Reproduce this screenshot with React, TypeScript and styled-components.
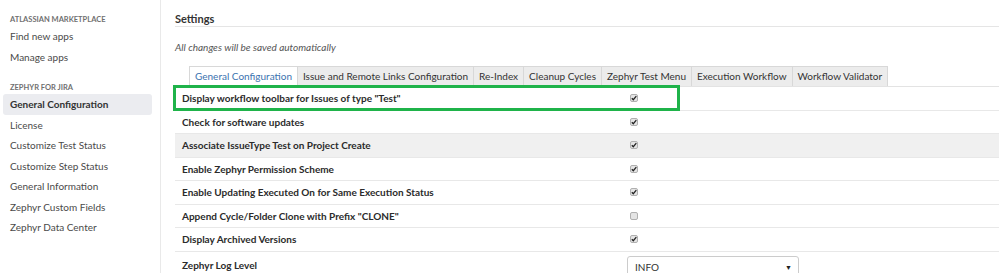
import styled, { createGlobalStyle } from "styled-components";

const GlobalStyle = createGlobalStyle`
  body {
    margin: 0;
    background: #fff;
    font-family: Lato, "Open Sans", sans-serif;
    color: #333;
  }
`;

const Page = styled.div`
  display: flex;
  width: 999px;
  height: 273px;
  overflow: hidden;
`;

const Sidebar = styled.nav`
  width: 161px;
  flex-shrink: 0;
  border-right: 1px solid #e9e9e9;
  padding-top: 14px;
  box-sizing: border-box;
`;

const GroupTitle = styled.div<{ gap?: number }>`
  margin-top: ${({ gap }) => gap || 0}px;
  padding-left: 10px;
  height: 12px;
  line-height: 12px;
  font-size: 7.5px;
  font-weight: 700;
  color: #707070;
  text-transform: uppercase;
`;

const NavItem = styled.div<{ active?: boolean }>`
  margin: 0 8px 0 3px;
  padding-left: 7px;
  height: 20.5px;
  line-height: 20.5px;
  font-size: 10px;
  border-radius: 3px;
  white-space: nowrap;
  color: ${({ active }) => (active ? "#333" : "#4a4a4a")};
  font-weight: ${({ active }) => (active ? 700 : 400)};
  background: ${({ active }) => (active ? "#ebecf0" : "transparent")};
`;

const Main = styled.main`
  flex: 1;
  padding-left: 14px;
`;

const Title = styled.h2`
  margin: 0;
  padding-top: 11px;
  height: 15px;
  line-height: 15px;
  font-size: 11px;
  font-weight: 700;
  color: #333;
  border-bottom: 1px solid #e5e5e5;
`;

const Note = styled.p`
  margin: 12px 0 0;
  height: 16px;
  line-height: 16px;
  font-size: 10px;
  font-style: italic;
  color: #555;
`;

const Tabs = styled.div`
  display: flex;
  margin-top: 11px;
  padding-left: 14px;
  border-bottom: 1px solid #e3e3e3;
`;

const Tab = styled.div<{ active?: boolean }>`
  height: 19px;
  line-height: 19px;
  padding: 0 5px;
  font-size: 10px;
  white-space: nowrap;
  border: 1px solid #d8d8d8;
  border-bottom: none;
  margin-right: -1px;
  margin-bottom: -1px;
  color: ${({ active }) => (active ? "#3b73af" : "#333")};
  background: ${({ active }) => (active ? "#fff" : "#ececec")};
  padding-bottom: ${({ active }) => (active ? 1 : 0)}px;
`;

const Row = styled.div<{ hover?: boolean }>`
  position: relative;
  display: grid;
  grid-template-columns: 452px 1fr;
  align-items: center;
  height: 23.5px;
  border-bottom: 1px solid #e8e8e8;
  box-sizing: border-box;
  background: ${({ hover }) => (hover ? "#f0f0f0" : "transparent")};
`;

const Label = styled.div`
  padding-left: 7px;
  font-size: 10px;
  font-weight: 700;
  color: #2b2b2b;
  white-space: nowrap;
`;

const Cell = styled.div`
  display: flex;
  align-items: center;
`;

const Check = styled.span<{ on?: boolean }>`
  display: inline-flex;
  align-items: center;
  justify-content: center;
  margin-left: 3px;
  width: 8px;
  height: 8px;
  border: 1px solid #b0b0b0;
  border-radius: 2px;
  background: #e4e4e4;
  box-sizing: border-box;
  svg {
    display: ${({ on }) => (on ? "block" : "none")};
  }
`;

const Highlight = styled.div`
  position: absolute;
  left: -2px;
  top: -2px;
  width: 507px;
  height: 26px;
  border: 3px solid #1fb34a;
  box-sizing: border-box;
  pointer-events: none;
`;

const SelectCell = styled.div`
  align-self: start;
  padding-top: 4px;
`;

const Select = styled.div`
  display: flex;
  align-items: center;
  justify-content: space-between;
  width: 172px;
  height: 22px;
  padding: 0 6px 0 7px;
  box-sizing: border-box;
  border: 1px solid #ccc;
  border-radius: 3px;
  font-size: 10px;
  color: #333;
  span {
    font-size: 7px;
    color: #222;
  }
`;

const tabs = [
  "General Configuration",
  "Issue and Remote Links Configuration",
  "Re-Index",
  "Cleanup Cycles",
  "Zephyr Test Menu",
  "Execution Workflow",
  "Workflow Validator",
];

const settings = [
  { label: 'Display workflow toolbar for Issues of type "Test"', on: true },
  { label: "Check for software updates", on: true },
  { label: "Associate IssueType Test on Project Create", on: true },
  { label: "Enable Zephyr Permission Scheme", on: true },
  { label: "Enable Updating Executed On for Same Execution Status", on: true },
  { label: 'Append Cycle/Folder Clone with Prefix "CLONE"', on: false },
  { label: "Display Archived Versions", on: true },
];

const Tick = () => (
  <svg width="6" height="6" viewBox="0 0 6 6">
    <path d="M0.8 3.2 L2.3 4.7 L5.3 1.2" fill="none" stroke="#222" strokeWidth="1.3" />
  </svg>
);

export default function App() {
  return (
    <>
      <GlobalStyle />
      <Page>
        <Sidebar>
          <GroupTitle>Atlassian Marketplace</GroupTitle>
          <NavItem>Find new apps</NavItem>
          <NavItem>Manage apps</NavItem>
          <GroupTitle gap={15}>Zephyr for Jira</GroupTitle>
          <NavItem active>General Configuration</NavItem>
          <NavItem>License</NavItem>
          <NavItem>Customize Test Status</NavItem>
          <NavItem>Customize Step Status</NavItem>
          <NavItem>General Information</NavItem>
          <NavItem>Zephyr Custom Fields</NavItem>
          <NavItem>Zephyr Data Center</NavItem>
        </Sidebar>
        <Main>
          <Title>Settings</Title>
          <Note>All changes will be saved automatically</Note>
          <Tabs>
            {tabs.map((t, i) => (
              <Tab key={t} active={i === 0}>
                {t}
              </Tab>
            ))}
          </Tabs>
          {settings.map((s, i) => (
            <Row key={s.label} hover={i === 2}>
              <Label>{s.label}</Label>
              <Cell>
                <Check on={s.on}>
                  <Tick />
                </Check>
              </Cell>
              {i === 0 && <Highlight />}
            </Row>
          ))}
          <Row>
            <Label>Zephyr Log Level</Label>
            <SelectCell>
              <Select>
                INFO <span>▼</span>
              </Select>
            </SelectCell>
          </Row>
        </Main>
      </Page>
    </>
  );
}
